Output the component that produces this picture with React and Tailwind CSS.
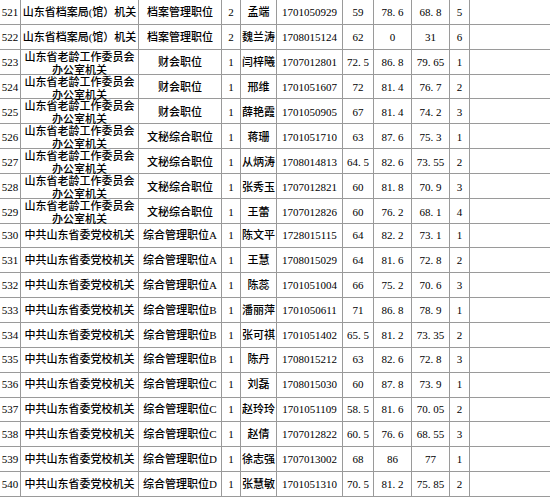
import React from 'react';

const rows = [
  ['521', '山东省档案局(馆）机关', '档案管理职位', '2', '孟端', '1701050929', '59', '78. 6', '68. 8', '5'],
  ['522', '山东省档案局(馆）机关', '档案管理职位', '2', '魏兰涛', '1708015124', '62', '0', '31', '6'],
  ['523', 'LAO', '财会职位', '1', '闫梓曦', '1707012801', '72. 5', '86. 8', '79. 65', '1'],
  ['524', 'LAO', '财会职位', '1', '邢维', '1701051607', '72', '81. 4', '76. 7', '2'],
  ['525', 'LAO', '财会职位', '1', '薛艳霞', '1701050905', '67', '81. 4', '74. 2', '3'],
  ['526', 'LAO', '文秘综合职位', '1', '蒋珊', '1701051710', '63', '87. 6', '75. 3', '1'],
  ['527', 'LAO', '文秘综合职位', '1', '从炳涛', '1708014813', '64. 5', '82. 6', '73. 55', '2'],
  ['528', 'LAO', '文秘综合职位', '1', '张秀玉', '1707012821', '60', '81. 8', '70. 9', '3'],
  ['529', 'LAO', '文秘综合职位', '1', '王蕾', '1707012826', '60', '76. 2', '68. 1', '4'],
  ['530', '中共山东省委党校机关', '综合管理职位A', '1', '陈文平', '1728015115', '64', '82. 2', '73. 1', '1'],
  ['531', '中共山东省委党校机关', '综合管理职位A', '1', '王慧', '1708015029', '64', '81. 6', '72. 8', '2'],
  ['532', '中共山东省委党校机关', '综合管理职位A', '1', '陈蕊', '1701051004', '66', '75. 2', '70. 6', '3'],
  ['533', '中共山东省委党校机关', '综合管理职位B', '1', '潘丽萍', '1701050611', '71', '86. 8', '78. 9', '1'],
  ['534', '中共山东省委党校机关', '综合管理职位B', '1', '张可祺', '1701051402', '65. 5', '81. 2', '73. 35', '2'],
  ['535', '中共山东省委党校机关', '综合管理职位B', '1', '陈丹', '1708015212', '63', '82. 6', '72. 8', '3'],
  ['536', '中共山东省委党校机关', '综合管理职位C', '1', '刘磊', '1708015030', '60', '87. 8', '73. 9', '1'],
  ['537', '中共山东省委党校机关', '综合管理职位C', '1', '赵玲玲', '1701051109', '58. 5', '81. 6', '70. 05', '2'],
  ['538', '中共山东省委党校机关', '综合管理职位C', '1', '赵倩', '1707012822', '60. 5', '76. 6', '68. 55', '3'],
  ['539', '中共山东省委党校机关', '综合管理职位D', '1', '徐志强', '1707013002', '68', '86', '77', '1'],
  ['540', '中共山东省委党校机关', '综合管理职位D', '1', '张慧敏', '1701051310', '70. 5', '81. 2', '75. 85', '2'],
];

const Unit = ({ value }) =>
  value === 'LAO' ? (
    <div className="relative top-[1px] text-center leading-[13px]">
      山东省老龄工作委员会
      <br />
      办公室机关
    </div>
  ) : (
    <span>{value}</span>
  );

export default function App() {
  return (
    <div className="h-[497px] w-[550px] overflow-hidden bg-white font-['Liberation_Serif','Noto_Sans_CJK_SC',serif] text-[11px] font-medium text-black">
      {rows.map((r) => (
        <div
          key={r[0]}
          className="grid h-[24.85px] grid-cols-[21px_118px_83px_19px_36px_66px_31px_38px_38px_20px_80px] border-b border-[#9a9a9a]"
        >
          {r.map((c, i) => (
            <div
              key={i}
              className="flex items-center justify-center overflow-visible whitespace-nowrap border-r border-[#9a9a9a]"
            >
              {i === 1 ? <Unit value={c} /> : c}
            </div>
          ))}
          <div />
        </div>
      ))}
    </div>
  );
}
